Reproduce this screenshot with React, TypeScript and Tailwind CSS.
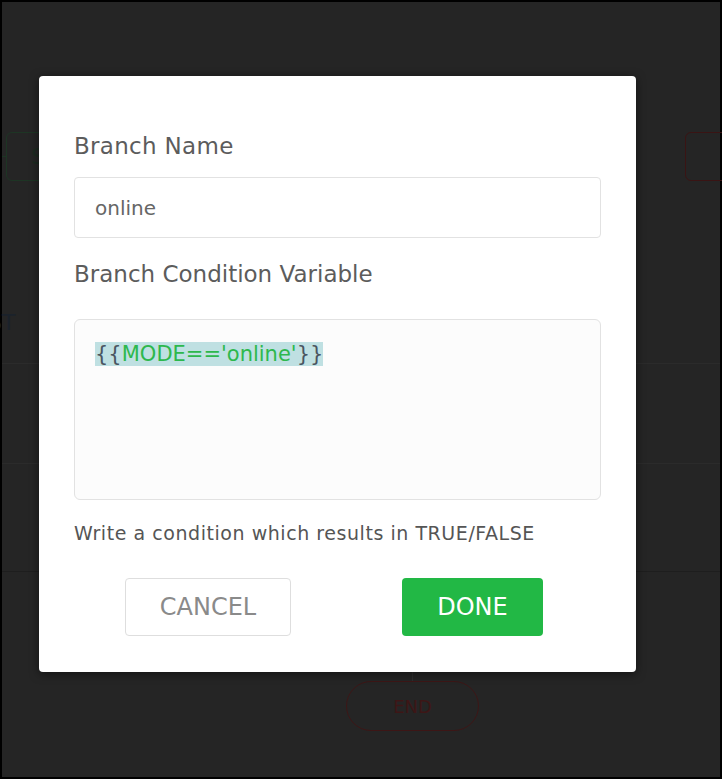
import React from "react";

const font = { fontFamily: '"DejaVu Sans", "Open Sans", sans-serif' };

// flow canvas nodes sitting behind the dimmed overlay
function Backdrop() {
  return (
    <div className="absolute inset-0">
      <div className="absolute left-[4px] top-[130px] flex h-[49px] w-[60px] items-center rounded-[6px] border border-[#1d3524] pl-[24px] text-[22px] text-[#1c2a20]">
        S
      </div>
      <div className="absolute left-0 top-[154px] h-px w-[4px] bg-[#1d3524]" />
      <div className="absolute left-[-14px] top-[307px] text-[22px] leading-[28px] text-[#1b222b]">ST</div>
      <div className="absolute left-0 right-0 top-[361px] h-px bg-[#2b2b2b]" />
      <div className="absolute left-0 right-0 top-[461px] h-px bg-[#2b2b2b]" />
      <div className="absolute left-0 right-0 top-[569px] h-px bg-[#1e1e1e]" />
      <div className="absolute left-[683px] top-[130px] h-[49px] w-[60px] rounded-[6px] border border-[#3a1414]" />
      <div className="absolute left-[410px] top-[670px] h-[10px] w-px bg-[#2e2e2e]" />
      <div className="absolute left-[344px] top-[679px] flex h-[50px] w-[133px] items-center justify-center rounded-full border border-[#3d1616] text-[18px] text-[#3d1616]">
        END
      </div>
    </div>
  );
}

export default function App() {
  return (
    <div className="h-[779px] w-[722px] overflow-hidden bg-black p-[2px]" style={font}>
      <div className="relative h-[775px] w-[718px] bg-[#252525]">
        <Backdrop />
        <div className="absolute left-[37px] top-[74px] w-[597px] rounded-[4px] bg-white px-[35px] pb-[36px] pt-[56px] shadow-[0_2px_10px_rgba(0,0,0,0.5)]">
          <label className="block text-[23px] leading-[28px] tracking-[0.3px] text-[#5c5c5c]">Branch Name</label>
          <div className="mt-[17px] flex h-[61px] items-center rounded-[4px] border border-[#e2e2e2] bg-white px-[20px] text-[20px] text-[#666]">
            online
          </div>
          <label className="mt-[22px] block text-[23px] leading-[28px] text-[#5c5c5c]">Branch Condition Variable</label>
          <div className="mt-[31px] h-[181px] rounded-[6px] border border-[#e2e2e2] bg-[#fcfcfc] px-[20px] pt-[20px] text-[21px] leading-[28px]">
            <span className="bg-[#bfe0e2]">
              <span className="text-[#4a5560]">{"{{"}</span>
              <span className="text-[#2db84d]">MODE=='online'</span>
              <span className="text-[#4a5560]">{"}}"}</span>
            </span>
          </div>
          <p className="mt-[22px] text-[19px] leading-[22px] tracking-[0.55px] text-[#555]">Write a condition which results in TRUE/FALSE</p>
          <div className="ml-[51px] mt-[34px] flex gap-[111px]">
            <button className="flex h-[58px] w-[166px] items-center justify-center rounded-[4px] border border-[#dedede] bg-white text-[24px] text-[#8a8a8a]">
              CANCEL
            </button>
            <button className="flex h-[58px] w-[141px] items-center justify-center rounded-[4px] bg-[#22b845] text-[24px] text-white">
              DONE
            </button>
          </div>
        </div>
      </div>
    </div>
  );
}
